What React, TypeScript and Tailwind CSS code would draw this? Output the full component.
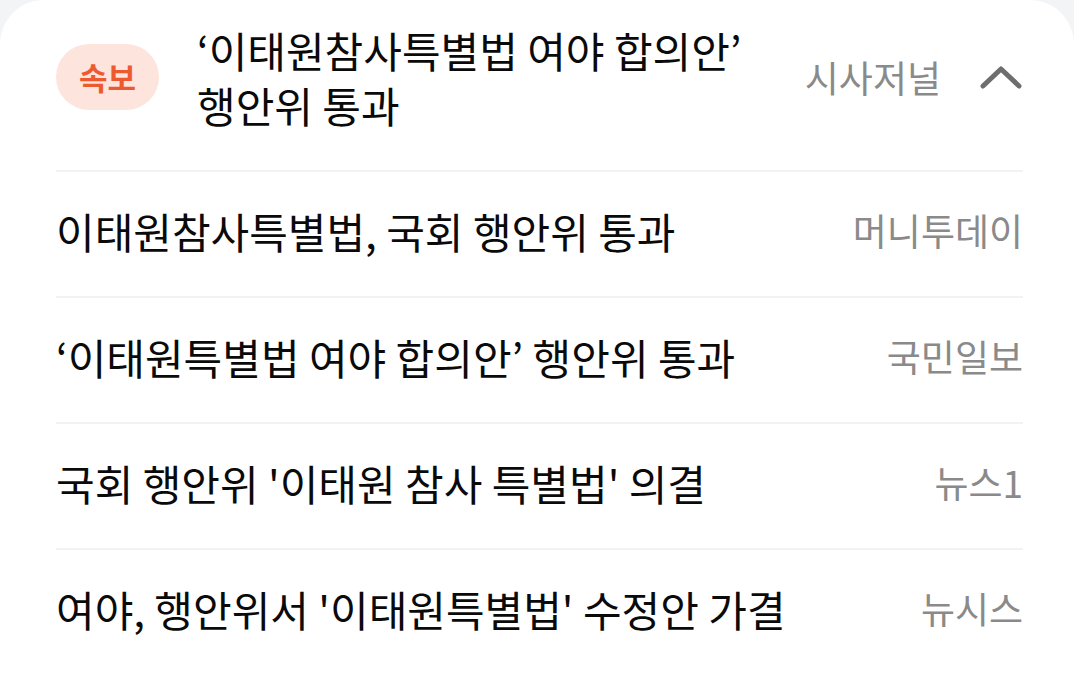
import React from "react"

const related = [
  { title: "이태원참사특별법, 국회 행안위 통과", press: "머니투데이" },
  { title: "‘이태원특별법 여야 합의안’ 행안위 통과", press: "국민일보" },
  { title: "국회 행안위 '이태원 참사 특별법' 의결", press: "뉴스1" },
  { title: "여야, 행안위서 '이태원특별법' 수정안 가결", press: "뉴시스" },
]

function ChevronUp() {
  return (
    <svg width="44" height="26" viewBox="0 0 44 26" fill="none">
      <path
        d="M4 22 L22 5 L40 22"
        stroke="#6e6e6e"
        strokeWidth="5"
        strokeLinecap="round"
        strokeLinejoin="round"
      />
    </svg>
  )
}

export default function App() {
  return (
    <div
      className="w-[1074px] h-[678px] overflow-hidden bg-[#f3f4f6]"
      style={{ fontFamily: '"Noto Sans CJK KR", "Noto Sans", sans-serif' }}
    >
      <div className="h-full bg-white rounded-t-[44px] pl-[56px] pr-[51px]">
        {/* headline row */}
        <div className="flex items-center h-[170px] pb-[16px]">
          <span className="flex items-center justify-center w-[103px] h-[66px] rounded-full bg-[#fde4dc] text-[#ee5a2f] text-[31px] font-bold">
            속보
          </span>
          <div className="flex-1 pl-[38px] text-[42px] leading-[55px] text-[#0a0a0a]">
            ‘이태원참사특별법 여야 합의안’
            <br />
            행안위 통과
          </div>
          <span className="text-[37px] text-[#8a8a8a] mr-[38px] pt-[2px]">시사저널</span>
          <ChevronUp />
        </div>

        {related.map((item) => (
          <div key={item.press}>
            <div className="h-[2px] bg-[#f2f2f2]" />
            <div className="flex items-center justify-between h-[124px] pb-[7px]">
              <span className="text-[42px] text-[#0a0a0a]">{item.title}</span>
              <span className="text-[37px] text-[#8a8a8a]">{item.press}</span>
            </div>
          </div>
        ))}
      </div>
    </div>
  )
}
